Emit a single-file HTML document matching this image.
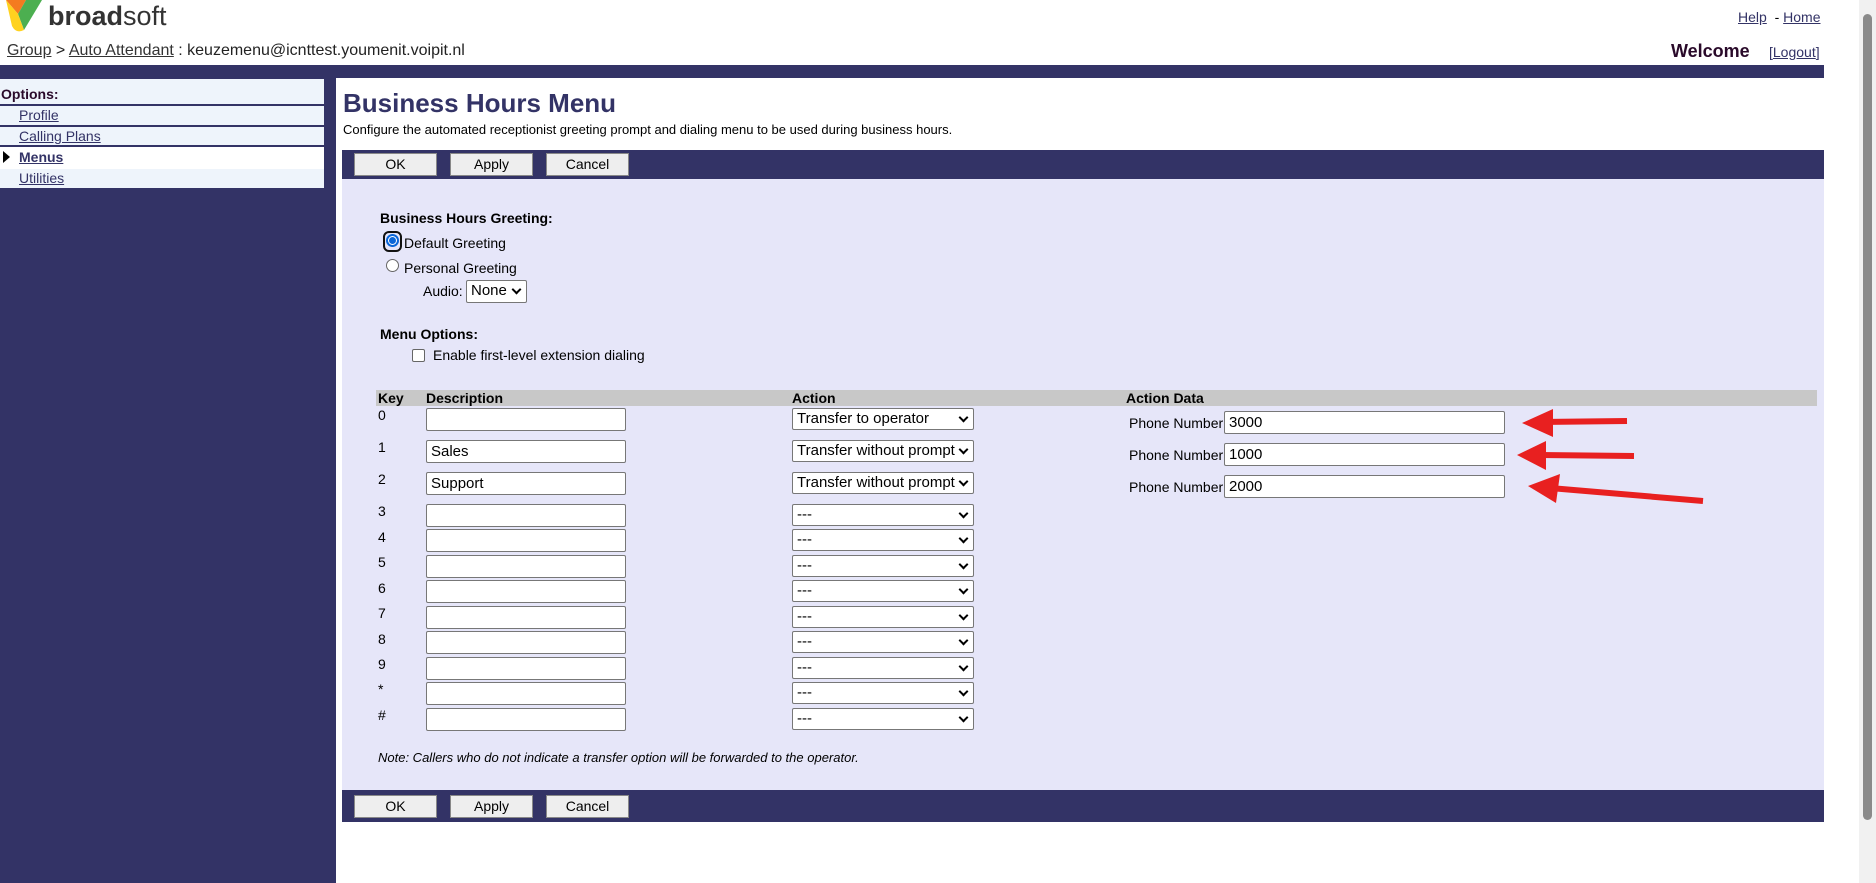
<!DOCTYPE html>
<html><head><meta charset="utf-8"><style>
*{margin:0;padding:0;box-sizing:border-box}
body{width:1876px;height:883px;position:relative;background:#fff;font-family:"Liberation Sans",Arial,sans-serif;font-size:14px;color:#000;overflow:hidden}
.a{position:absolute;white-space:nowrap}
a,.u{color:#333366;text-decoration:underline}
.btn{position:absolute;height:23px;background:#eee;border:1px solid #888;font-size:14px;text-align:center;line-height:21px;width:83px}
.in{position:absolute;height:23px;background:#fff;border:1px solid #777;border-radius:2px;font-size:15px;padding-left:4px;line-height:21px}
.sel{position:absolute;height:22px;background:#fff;border:1px solid #777;border-radius:2px;font-size:15px;padding-left:4px;line-height:20px;width:182px}
.sel:after{content:"";position:absolute;right:6px;top:5px;width:5px;height:5px;border-right:2px solid #000;border-bottom:2px solid #000;transform:rotate(45deg)}
.k{position:absolute;left:378px;font-size:14px}
</style></head><body>
<svg class="a" style="left:4px;top:0" width="40" height="34" viewBox="0 0 40 34">
<path d="M2 0 L22 0 L14 14 Z" fill="#f47b20"/>
<path d="M22 0 L38 0 L20 30 L14 14 Z" fill="#4caf50"/>
<path d="M2 0 L14 14 L20 30 Q12 34 8 26 Z" fill="#ffd21f"/>
</svg>
<div class="a" style="left:48px;top:1px;font-size:27px;color:#333"><b>broad</b>soft</div>
<div class="a" style="left:1738px;top:9px;font-size:14px"><a>Help</a>&nbsp; - <a>Home</a></div>
<div class="a" style="left:7px;top:42px;font-size:16px;color:#222"><a style="color:#333">Group</a> &gt; <a style="color:#333">Auto Attendant</a> : keuzemenu@icnttest.youmenit.voipit.nl</div>
<div class="a" style="left:1671px;top:41px;font-size:18px;font-weight:bold;color:#2a0a2a">Welcome</div>
<div class="a" style="left:1769px;top:44px;font-size:14px;color:#333366">[<span class="u">Logout</span>]</div>
<div class="a" style="left:0;top:65px;width:1824px;height:13px;background:#333366"></div>
<div class="a" style="left:0;top:78px;width:336px;height:805px;background:#333366"></div>
<div class="a" style="left:0;top:79px;width:324px;height:109px;background:#eef4fb"></div>
<div class="a" style="left:1px;top:86px;font-size:14px;font-weight:bold;color:#2a0a2a">Options:</div>
<div class="a" style="left:0;top:104px;width:324px;height:2px;background:#333366"></div>
<div class="a" style="left:19px;top:107px;font-size:14px"><a>Profile</a></div>
<div class="a" style="left:0;top:125px;width:324px;height:2px;background:#333366"></div>
<div class="a" style="left:19px;top:128px;font-size:14px"><a>Calling Plans</a></div>
<div class="a" style="left:0;top:145px;width:324px;height:2px;background:#333366"></div>
<div class="a" style="left:0;top:147px;width:324px;height:22px;background:#fff"></div>
<div class="a" style="left:3px;top:151px;width:0;height:0;border-left:7px solid #000;border-top:6px solid transparent;border-bottom:6px solid transparent"></div>
<div class="a" style="left:19px;top:149px;font-size:14px;font-weight:bold"><a>Menus</a></div>
<div class="a" style="left:19px;top:170px;font-size:14px"><a>Utilities</a></div>
<div class="a" style="left:336px;top:78px;width:1488px;height:805px;background:#fff"></div>
<div class="a" style="left:343px;top:88px;font-size:26px;font-weight:bold;color:#333366">Business Hours Menu</div>
<div class="a" style="left:343px;top:122px;font-size:13px">Configure the automated receptionist greeting prompt and dialing menu to be used during business hours.</div>
<div class="a" style="left:342px;top:150px;width:1482px;height:29px;background:#333366"></div>
<div class="btn" style="left:354px;top:153px">OK</div><div class="btn" style="left:450px;top:153px">Apply</div><div class="btn" style="left:546px;top:153px">Cancel</div>
<div class="a" style="left:342px;top:179px;width:1482px;height:611px;background:#e6e6f9"></div>
<div class="a" style="left:342px;top:790px;width:1482px;height:32px;background:#333366"></div>
<div class="btn" style="left:354px;top:795px">OK</div><div class="btn" style="left:450px;top:795px">Apply</div><div class="btn" style="left:546px;top:795px">Cancel</div>
<div class="a" style="left:380px;top:210px;font-size:14px;font-weight:bold">Business Hours Greeting:</div>
<div class="a" style="left:383px;top:231px;width:19px;height:21px;border:2px solid #111;border-radius:6px"></div>
<div class="a" style="left:386px;top:234px;width:13px;height:13px;border-radius:50%;border:2px solid #0a66d8;background:#fff"></div>
<div class="a" style="left:389px;top:237px;width:7px;height:7px;border-radius:50%;background:#0a66d8"></div>
<div class="a" style="left:404px;top:235px;font-size:14px">Default Greeting</div>
<div class="a" style="left:386px;top:259px;width:13px;height:13px;border-radius:50%;border:1px solid #666;background:#fff"></div>
<div class="a" style="left:404px;top:260px;font-size:14px">Personal Greeting</div>
<div class="a" style="left:423px;top:283px;font-size:14px">Audio:</div>
<div class="sel" style="left:466px;top:280px;width:61px;height:23px;font-size:15px">None</div>
<div class="a" style="left:380px;top:326px;font-size:14px;font-weight:bold">Menu Options:</div>
<div class="a" style="left:412px;top:349px;width:13px;height:13px;border:1px solid #666;border-radius:2px;background:#fff"></div>
<div class="a" style="left:433px;top:347px;font-size:14px">Enable first-level extension dialing</div>
<div class="a" style="left:376px;top:390px;width:1441px;height:16px;background:#c8c8c8"></div>
<div class="a" style="left:378px;top:390px;font-size:14px;font-weight:bold">Key</div>
<div class="a" style="left:426px;top:390px;font-size:14px;font-weight:bold">Description</div>
<div class="a" style="left:792px;top:390px;font-size:14px;font-weight:bold">Action</div>
<div class="a" style="left:1126px;top:390px;font-size:14px;font-weight:bold">Action Data</div>

<div class="k" style="top:407px">0</div><div class="in" style="left:426px;top:408px;width:200px"></div><div class="sel" style="left:792px;top:408px">Transfer to operator</div>
<div class="k" style="top:439px">1</div><div class="in" style="left:426px;top:440px;width:200px">Sales</div><div class="sel" style="left:792px;top:440px">Transfer without prompt</div>
<div class="k" style="top:471px">2</div><div class="in" style="left:426px;top:472px;width:200px">Support</div><div class="sel" style="left:792px;top:472px">Transfer without prompt</div>
<div class="k" style="top:503px">3</div><div class="in" style="left:426px;top:504px;width:200px"></div><div class="sel" style="left:792px;top:504px">---</div>
<div class="k" style="top:529px">4</div><div class="in" style="left:426px;top:529px;width:200px"></div><div class="sel" style="left:792px;top:529px">---</div>
<div class="k" style="top:554px">5</div><div class="in" style="left:426px;top:555px;width:200px"></div><div class="sel" style="left:792px;top:555px">---</div>
<div class="k" style="top:580px">6</div><div class="in" style="left:426px;top:580px;width:200px"></div><div class="sel" style="left:792px;top:580px">---</div>
<div class="k" style="top:605px">7</div><div class="in" style="left:426px;top:606px;width:200px"></div><div class="sel" style="left:792px;top:606px">---</div>
<div class="k" style="top:631px">8</div><div class="in" style="left:426px;top:631px;width:200px"></div><div class="sel" style="left:792px;top:631px">---</div>
<div class="k" style="top:656px">9</div><div class="in" style="left:426px;top:657px;width:200px"></div><div class="sel" style="left:792px;top:657px">---</div>
<div class="k" style="top:681px">*</div><div class="in" style="left:426px;top:682px;width:200px"></div><div class="sel" style="left:792px;top:682px">---</div>
<div class="k" style="top:707px">#</div><div class="in" style="left:426px;top:708px;width:200px"></div><div class="sel" style="left:792px;top:708px">---</div>

<div class="a" style="left:1129px;top:415px;font-size:14px">Phone Number:</div><div class="in" style="left:1224px;top:411px;width:281px">3000</div>
<div class="a" style="left:1129px;top:447px;font-size:14px">Phone Number:</div><div class="in" style="left:1224px;top:443px;width:281px">1000</div>
<div class="a" style="left:1129px;top:479px;font-size:14px">Phone Number:</div><div class="in" style="left:1224px;top:475px;width:281px">2000</div>
<svg class="a" style="left:0;top:0" width="1876" height="883">
<g stroke="#e82020" stroke-width="6">
<line x1="1627" y1="421" x2="1540" y2="422"/>
<line x1="1634" y1="456" x2="1540" y2="455"/>
<line x1="1703" y1="501" x2="1550" y2="488"/>
</g>
<g fill="#e82020">
<polygon points="1522,423 1553,409 1553,437"/>
<polygon points="1517,455 1546,441 1546,470"/>
<polygon points="1528,486 1560,474 1556,503"/>
</g>
</svg>
<div class="a" style="left:378px;top:750px;font-size:13px;font-style:italic">Note: Callers who do not indicate a transfer option will be forwarded to the operator.</div>
<div class="a" style="left:1859px;top:0;width:17px;height:883px;background:#f1f1f1"></div>
<div class="a" style="left:1863px;top:14px;width:9px;height:806px;background:#8a8a8a;border-radius:5px"></div>
</body></html>
